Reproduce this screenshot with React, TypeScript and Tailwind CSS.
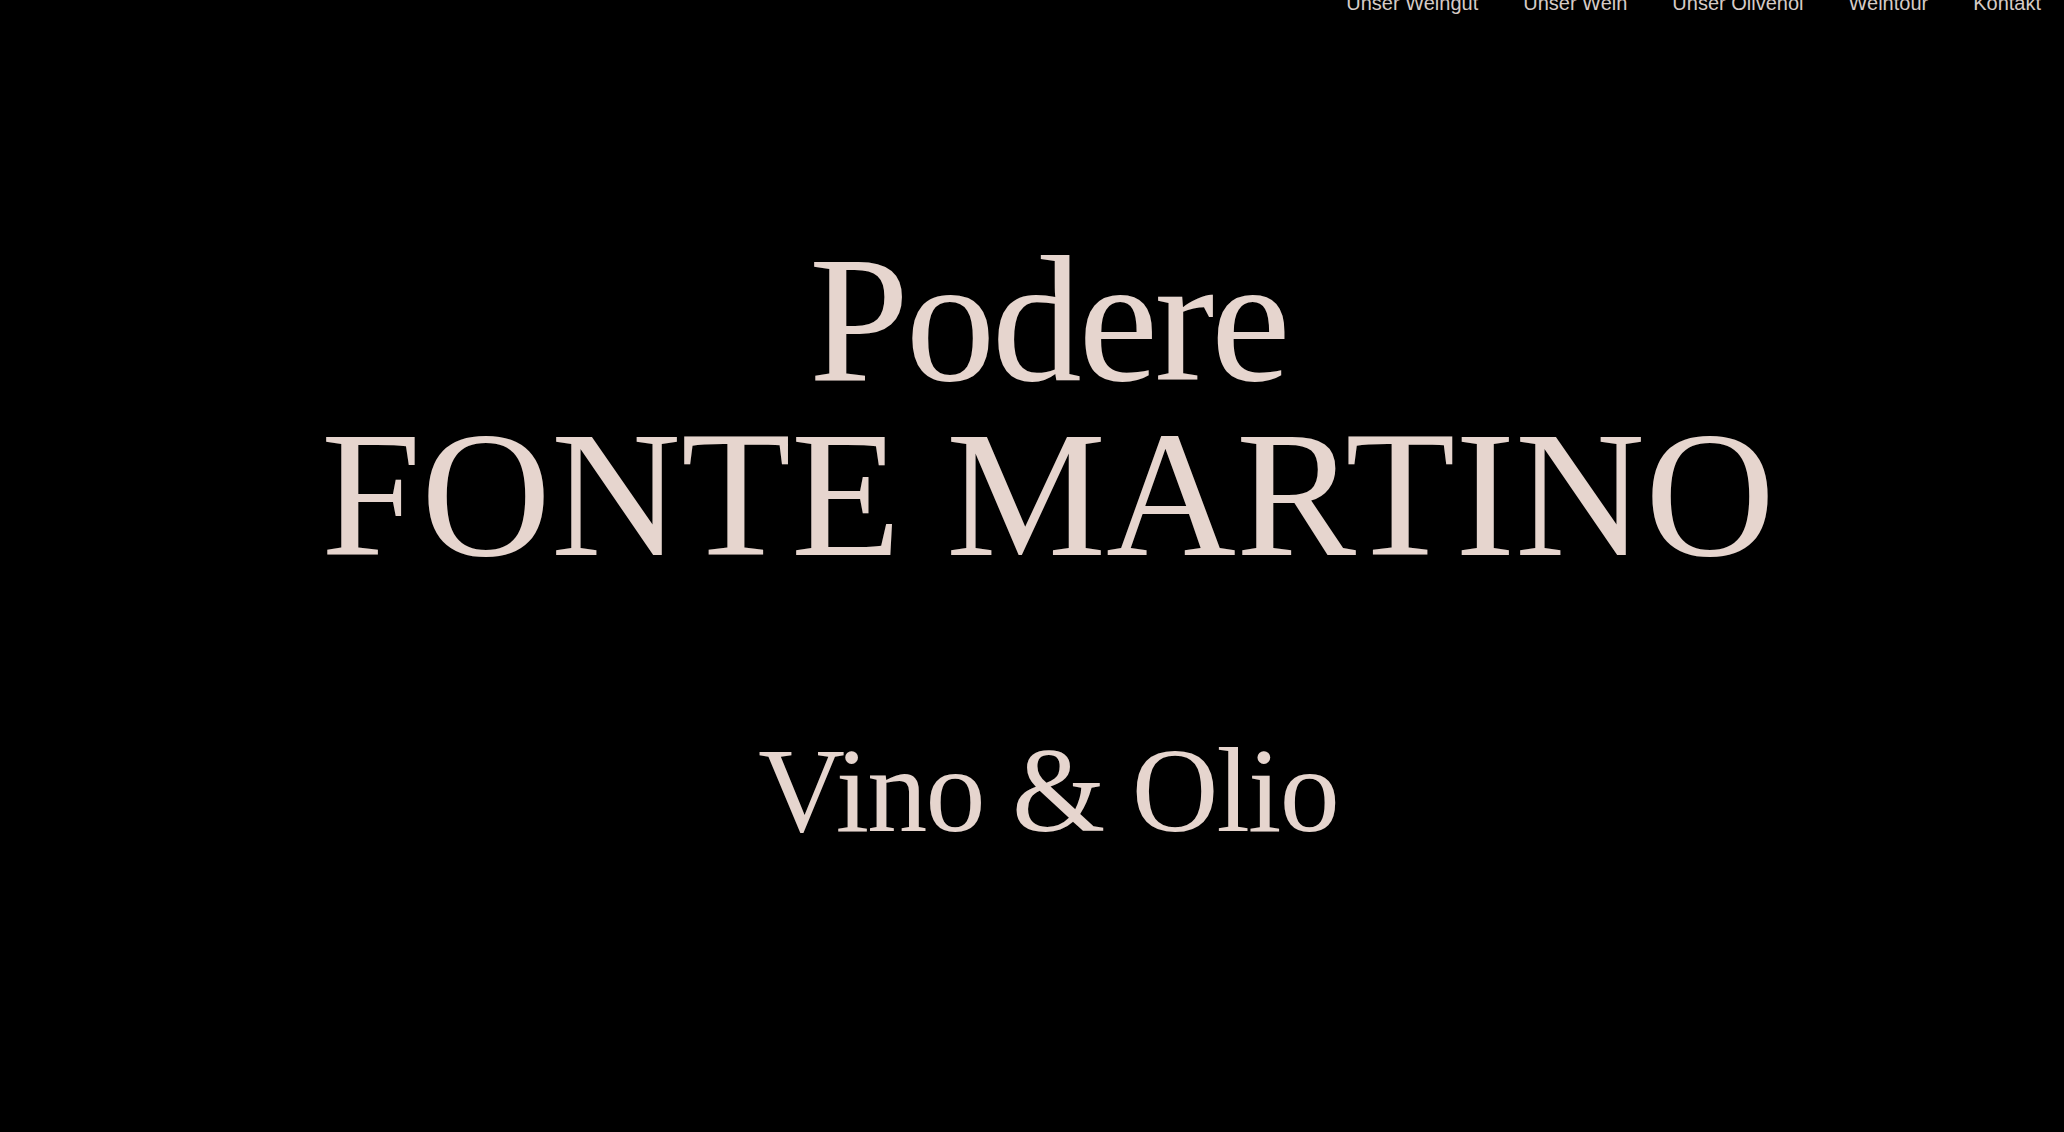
import React from 'react';

const navItems = ['Unser Weingut', 'Unser Wein', 'Unser Olivenöl', 'Weintour', 'Kontakt'];

const App: React.FC = () => {
  return (
    <div className="min-h-screen overflow-hidden bg-black">
      {/* Top navigation, partly cut off at the top edge */}
      <nav className="-mt-[7px] flex justify-end gap-[45px] pr-[23px] font-['Liberation_Sans',Arial,sans-serif] text-[20px] font-light leading-none text-[#d6cbc7]">
        {navItems.map((item) => (
          <a key={item} href="#" className="whitespace-nowrap">
            {item}
          </a>
        ))}
      </nav>

      {/* Hero */}
      <main className="flex flex-col items-center pl-[32px] text-center font-['Liberation_Serif','Times_New_Roman',serif] text-[#e6d5ce]">
        <h1 className="mt-[219px] text-[180px] font-normal leading-[175px]">
          <span className="block tracking-[-0.02em]">Podere</span>
          <span className="block">FONTE MARTINO</span>
        </h1>
        <p className="mt-[137px] text-[120px] leading-[144px] tracking-[-0.015em]">Vino &amp; Olio</p>
      </main>
    </div>
  );
};

export default App;
